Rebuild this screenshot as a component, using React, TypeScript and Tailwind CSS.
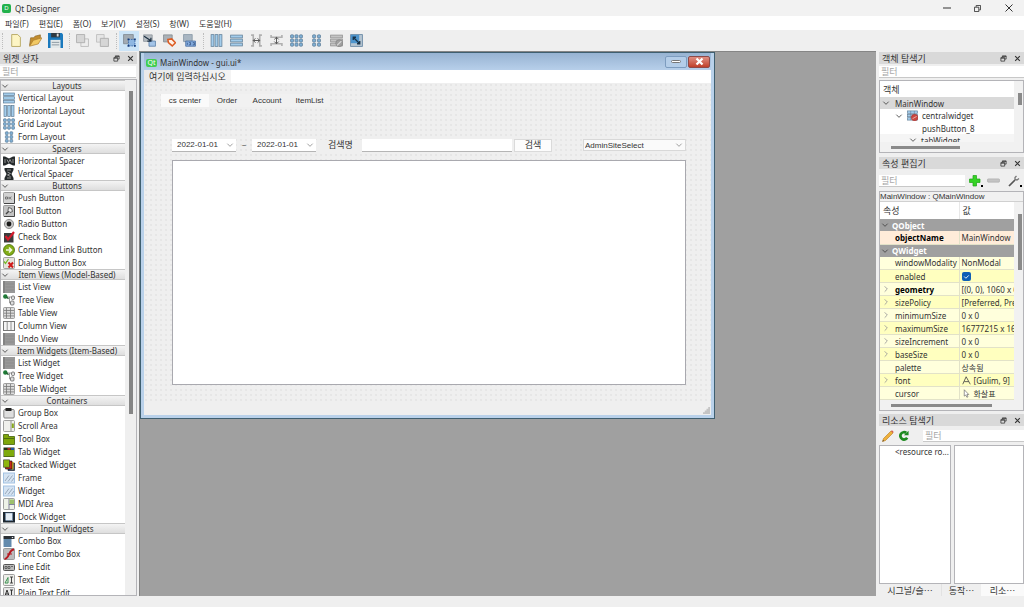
import type { ReactNode } from "react";

type Name = string;

const BLUE = "#7fb0d6";
const EDGE = "#5f7d96";

function Bars({ vertical, gray }: { vertical?: boolean; gray?: boolean }) {
  return (
    <g fill={gray ? "#c4c4c4" : "#a3cdec"} stroke={gray ? "#8c8c8c" : EDGE} strokeWidth=".7">
      {[1, 4.7, 8.4].map((p) =>
        vertical ? <rect key={p} x={p} y="0.6" width="2.6" height="10.8" /> : <rect key={p} x="0.6" y={p} width="10.8" height="2.6" />
      )}
    </g>
  );
}

function Dots({ cols }: { cols: number[] }) {
  return (
    <g fill={BLUE} stroke={EDGE} strokeWidth=".7">
      {cols.map((x) => [0.8, 4.6, 8.4].map((y) => <rect key={x + "-" + y} x={x} y={y} width="2.8" height="2.8" rx=".6" />))}
    </g>
  );
}

const Plate = ({ fill = "#d5d5d5" }: { fill?: string }) => (
  <rect x=".5" y=".5" width="11" height="11" rx="1" fill={fill} stroke="#8a8a8a" strokeWidth=".8" />
);

const ICONS: Record<Name, ReactNode> = {
  vlayout: <Bars />,
  hlayout: <Bars vertical />,
  grid: <Dots cols={[0.5, 4.6, 8.7]} />,
  form: <Dots cols={[2.4, 6.9]} />,
  hspacer: (
    <>
      <path d="M0 1.5h2L6 3.500l4-2H12v9H10L6 8.500l-4 2H0z" fill="#252a2c" />
      <path d="M2 4v4M4 4.500l1.500 3 1.500-3 1.500 3M10 4v4" stroke="#aaa" strokeWidth=".8" fill="none" />
    </>
  ),
  vspacer: (
    <>
      <path d="M1.500 0v2L3.500 6 1.500 10V12h9V10L8.500 6l2-4V0z" fill="#252a2c" />
      <path d="M4 2h4M4.500 4l3 1.500-3 1.500 3 1.500M4 10h4" stroke="#aaa" strokeWidth=".8" fill="none" />
    </>
  ),
  push: (
    <>
      <Plate fill="#d2d2d2" />
      <path d="M1 11.500h10.500V1" stroke="#444" fill="none" />
      <path d="M2.500 5h2v2H2.500zM6 4.800v2.500M8.500 4.800L6.500 6l2 1.300" stroke="#555" fill="none" strokeWidth=".7" />
    </>
  ),
  tool: (
    <>
      <Plate fill="#c2c2c2" />
      <path d="M1 11.500h10.500V1" stroke="#444" fill="none" />
      <path d="M3 9l4-4" stroke="#444" strokeWidth="1.500" />
      <path d="M5.500 2.500l3 1 1 3-2.500 1L5 5.500z" stroke="#444" fill="#eee" strokeWidth=".8" />
    </>
  ),
  radio: (
    <>
      <circle cx="6" cy="6" r="4.600" fill="#c4c4c4" stroke="#888" strokeWidth=".9" />
      <circle cx="6" cy="6" r="2.400" fill="#1a1a1a" />
    </>
  ),
  check: (
    <>
      <path d="M1 2h9.500v9.500H1z" fill="#3c3c3c" />
      <path d="M2.500 5l2.500 3.500L11 1" stroke="#d41c2c" strokeWidth="2.200" fill="none" />
    </>
  ),
  command: (
    <>
      <circle cx="6" cy="6" r="5.500" fill="#82ad16" stroke="#4b6d0b" strokeWidth=".8" />
      <path d="M3 6h5M6 3.500L8.500 6 6 8.500" stroke="#f2f7df" strokeWidth="1.600" fill="none" />
    </>
  ),
  dialog: (
    <>
      <Plate fill="#e6e3dc" />
      <path d="M1 4.500l1.500 2L5.500 2" stroke="#77b82a" fill="none" strokeWidth="1.300" />
      <path d="M5.500 5.500l4.500 5M10 5.500l-4.500 5" stroke="#cf1d1d" strokeWidth="2" />
    </>
  ),
  list: (
    <>
      <path d="M0 0h12v12H0z" fill="#989898" />
      <path d="M0 0h2v12H0z" fill="#838383" />
      <path d="M2.500 3h8.500M2.500 6h8.500M2.500 9h8.500" stroke="#888" strokeWidth=".7" />
    </>
  ),
  tree: (
    <>
      <path d="M4 3h4.500M6.500 3v6H9" stroke="#888" fill="none" strokeWidth=".8" />
      <circle cx="2.300" cy="2.500" r="2.200" fill="#1f7a37" />
      <path d="M3.500 3l2 1.800" stroke="#1f5a2c" strokeWidth="1.200" />
      <rect x="8.500" y="2" width="3" height="3.500" rx="1" fill="#ddd" stroke="#555" strokeWidth=".7" />
      <rect x="7.500" y="7" width="3.500" height="4" rx="1" fill="#ddd" stroke="#555" strokeWidth=".7" />
    </>
  ),
  table: (
    <>
      <Plate fill="#dcdcdc" />
      <path d="M1 3.500h10M1 6.200h10M1 8.900h10M3.500 1v10M7.500 1v10" stroke="#777" strokeWidth=".8" />
    </>
  ),
  column: (
    <>
      <rect x=".5" y="1.500" width="11" height="9" fill="#f4f4f4" stroke="#777" />
      <path d="M4.200 2v8M8 2v8" stroke="#888" strokeWidth=".9" />
    </>
  ),
  group: (
    <>
      <rect x=".8" y="2.500" width="10.400" height="8.500" rx="1" fill="#dedede" stroke="#777" strokeWidth=".9" />
      <path d="M2.500 1h6v3h-6z" fill="#222" />
    </>
  ),
  scroll: (
    <>
      <Plate fill="#f0f0ec" />
      <path d="M8 1v10" stroke="#777" strokeWidth=".8" />
      <path d="M8.800 3.500h2v4.500H8.800z" fill="#87a91b" />
    </>
  ),
  toolbox: (
    <>
      <path d="M.5 1.500h5v2h6v8H.5z" fill="#7fa60a" stroke="#42600b" strokeWidth=".8" />
      <path d="M1 5.500h10" stroke="#4f6f0c" />
    </>
  ),
  tab: (
    <>
      <path d="M.5 1.500h11v9.500H.5z" fill="#223018" />
      <path d="M1 4h10v6.500H1z" fill="#7eaa0c" />
      <path d="M4.500 2h3v1.800h-3z" fill="#ba2b20" />
      <path d="M8 2h3v1.800H8z" fill="#2458aa" />
    </>
  ),
  stacked: (
    <>
      <path d="M5 4h6.500v7.500H5z" fill="#21448f" stroke="#111" strokeWidth=".6" />
      <path d="M7.500 3h3v7.500h-3z" fill="#e7c41f" />
      <path d="M2.500 2h6.500v8H2.500z" fill="#c92818" stroke="#111" strokeWidth=".6" />
      <path d="M.5.800h6v7.500H.5z" fill="#8db60e" stroke="#333" strokeWidth=".6" />
    </>
  ),
  frame: (
    <>
      <rect x=".5" y="1" width="11" height="10" fill="#d5e3f2" stroke="#a3c2e2" />
      <path d="M2 9l4-5.500M5 9.500l4.500-6M8.500 9.500L11 6" stroke="#9aa9ba" strokeWidth="1" />
    </>
  ),
  mdi: (
    <>
      <Plate fill="#eef2e8" />
      <path d="M6 1v10M6 6.500h5.500" stroke="#668" strokeWidth=".8" />
      <path d="M6.500 1.500h4.500v4.500H6.500z" fill="#9cc06b" />
    </>
  ),
  dock: (
    <>
      <path d="M0 1h12v10.500H0z" fill="#1c2630" />
      <path d="M2.500 2h7v7.500h-7z" fill="#e5edf5" />
      <path d="M2.500 2h7v7.500h-7z" stroke="#6c8db0" strokeDasharray="1 1" fill="none" />
    </>
  ),
  combo: (
    <>
      <path d="M.5 1h11v3H.5z" fill="#2b3036" />
      <path d="M.5 4h8v8h-8z" fill="#648bad" />
      <path d="M8.500 2h2l-1 1.300z" fill="#fff" />
    </>
  ),
  fontcombo: (
    <>
      <Plate fill="#bcbcbc" />
      <path d="M1.500 11C6.500 11 5.500 1.500 11 1.500" stroke="#b71820" strokeWidth="1.900" fill="none" />
      <path d="M4 6h5" stroke="#b71820" />
    </>
  ),
  line: (
    <>
      <rect x=".5" y="3.500" width="11" height="6" rx="1" fill="#bbb" stroke="#555" />
      <path d="M2 5.500h2v2H2zM5 5.500h2v2H5zM8 5.500h2" stroke="#333" fill="none" strokeWidth=".6" />
    </>
  ),
  text: (
    <>
      <Plate fill="#eeeeea" />
      <path d="M2 9l3-5.500V9z" stroke="#3a9150" fill="none" />
      <path d="M7 3h3M8.500 3v6M7 9h3" stroke="#333" strokeWidth=".9" />
    </>
  ),
  plain: (
    <>
      <Plate fill="#e6e6e6" />
      <path d="M2 9l2-6 2 6M2.500 7h3M7 3h3M8.500 3v6M7 9h3" stroke="#222" strokeWidth=".9" fill="none" />
    </>
  ),
  new: <path d="M2.500.500h5.500l2.500 2.500v8.500h-8z" fill="#fdf5c4" stroke="#b3a35c" strokeWidth=".8" />,
  open: (
    <>
      <path d="M.5 10.500L1.500 3.500h3l1-1.500L10.500.800v4z" fill="#c28d2f" stroke="#8b6420" strokeWidth=".6" />
      <path d="M.5 11.300L4 5.800 12 3.500 8.500 9.200z" fill="#f2c964" stroke="#a87829" strokeWidth=".6" />
    </>
  ),
  save: (
    <>
      <path d="M0 0h11l1 1v11H0z" fill="#1a79bd" />
      <path d="M2.500 0h7v3.500h-7z" fill="#2f3a42" />
      <path d="M7 .500h1.500v2.300H7z" fill="#ddd" />
      <path d="M2 5.500h8V12H2z" fill="#e3e8e9" />
      <path d="M3 7.500h6M3 9.500h6" stroke="#8f9ba4" strokeWidth=".8" />
    </>
  ),
  back: (
    <>
      <path d="M4.500 4.500h7v7h-7z" fill="#ededed" stroke="#b9b9b9" strokeWidth=".8" />
      <path d="M.5.500h7.500v7.500H.5z" fill="#d6d6d6" stroke="#adadad" strokeWidth=".8" />
    </>
  ),
  front: (
    <>
      <path d="M.5.500h7v7h-7z" fill="#e6e6e6" stroke="#bebebe" strokeWidth=".8" />
      <path d="M4 4h7.500v7.500H4z" fill="#d6d6d6" stroke="#adadad" strokeWidth=".8" />
    </>
  ),
  widgets: (
    <>
      <path d="M.5.500h9v8.500h-9z" fill="#a2abb3" stroke="#7b848c" strokeWidth=".7" />
      <path d="M5 5h6v6H5z" fill="#8fb7e2" stroke="#3565a5" strokeWidth=".8" strokeDasharray="1.500 .8" />
      <path d="M4.200 4.200h1.600v1.600H4.200zM10.200 4.200h1.600v1.600h-1.600zM4.200 10.200h1.600v1.600H4.200zM10.200 10.200h1.600v1.600h-1.600z" fill="#173d7d" />
    </>
  ),
  signals: (
    <>
      <path d="M.5.800h8v6h-8z" fill="#b6bcc2" stroke="#878f96" strokeWidth=".7" />
      <path d="M5.500 6.500h6v4.800h-6z" fill="#a3c4e8" stroke="#547ba5" strokeWidth=".7" />
      <path d="M1 2l6 4M7.300 3.500v3H4" stroke="#1c2f42" strokeWidth="1.100" fill="none" />
    </>
  ),
  buddies: (
    <>
      <path d="M.5.800h8v6.500h-8z" fill="#aab1b7" stroke="#80878d" strokeWidth=".7" />
      <path d="M4.500 5l3.500-.5L11.500 8 8.500 11 5 8z" fill="#fff0e5" stroke="#dc5b22" strokeWidth="1.400" />
    </>
  ),
  taborder: (
    <>
      <path d="M.5.500h8v6.500h-8z" fill="#a9b6c2" stroke="#8394a3" strokeWidth=".7" />
      <path d="M2.500 6.500h9v4.800h-9z" fill="#86ade0" stroke="#42699c" strokeWidth=".7" />
      <path d="M4 8v2M5.500 8h1.500v2H5.500M9 8h1.500v2H9" stroke="#24426d" strokeWidth=".6" fill="none" />
    </>
  ),
  hsplit: (
    <>
      <path d="M1 1h2v10H1M11 1H9v10h2" stroke="#b0b0b0" strokeWidth="1.500" fill="none" />
      <path d="M3 6h6M5 4L3 6l2 2M7 4l2 2-2 2" stroke="#555" strokeWidth=".9" fill="none" />
    </>
  ),
  vsplit: (
    <>
      <path d="M1 1v2h10V1M1 11V9h10v2" stroke="#b0b0b0" strokeWidth="1.500" fill="none" />
      <path d="M6 3v6M4 5l2-2 2 2M4 7l2 2 2-2" stroke="#555" strokeWidth=".9" fill="none" />
    </>
  ),
  breaklayout: (
    <>
      <Bars gray />
      <circle cx="8.500" cy="8.500" r="3.200" fill="#a0a0a0" stroke="#868686" strokeWidth=".7" />
      <path d="M6.500 10.500l4-4" stroke="#ddd" />
    </>
  ),
  adjust: (
    <>
      <path d="M.5.500h11v11H.5z" fill="#b5c5d2" stroke="#6a8aa6" strokeWidth=".8" />
      <path d="M.8.800h7.700v7.700H.8z" fill="#4d94cc" />
      <path d="M3 3l6 6M3 5.500V3h2.500M9 6.500V9H6.500" stroke="#173248" strokeWidth="1.200" fill="none" />
    </>
  ),
  central: (
    <>
      <Bars />
      <path d="M4 1v10M8 1v10" stroke={EDGE} strokeWidth=".6" />
      <circle cx="8.300" cy="8.300" r="3.600" fill="#cc4840" stroke="#a22d29" strokeWidth=".5" />
      <path d="M6 9.500l4.500-2.500" stroke="#e9b5b0" strokeWidth="1" />
    </>
  ),
  plus: <path d="M4 .500h3.500V4H11v3.500H7.500V11H4V7.500H.5V4H4z" fill="#35d325" stroke="#1ca515" strokeWidth=".7" />,
  minus: <rect x=".5" y="4.500" width="11" height="3" rx=".6" fill="#c4c4c4" stroke="#aaa" strokeWidth=".6" />,
  wrench: (
    <>
      <path d="M1 11l6-6" stroke="#555" strokeWidth="1.700" />
      <path d="M8.500 1L7 2.500v2l2 .5 2-1.500" stroke="#777" strokeWidth="1.300" fill="none" />
    </>
  ),
  pencil: (
    <>
      <path d="M.5 11.500l1-3L9 1l2 2-7.500 7.500z" fill="#eeb13c" stroke="#b97a1d" strokeWidth=".6" />
      <path d="M9 1l1-.8L11.700 2 11 3z" fill="#d4574d" />
      <path d="M.5 11.500l.5-1.500 1 1z" fill="#333" />
    </>
  ),
  reload: (
    <>
      <path d="M10 8.500A4 4 0 1 1 9 3.200" stroke="#1d8a20" strokeWidth="3" fill="none" />
      <path d="M11.500.800v5h-5z" fill="#1d8a20" />
    </>
  ),
  fontA: <path d="M1 11L5.500 1 11 11M3 7.500h6" stroke="#444" strokeWidth="1.100" fill="none" />,
  cursor: <path d="M3 1v8.500l2-1.500 1.500 3 1.500-.7-1.500-3H9z" fill="#fff" stroke="#555" strokeWidth=".8" />,
  restore: <path d="M4 4V1.500h6.500V7H8M1.500 4.500H8v6H1.500zM1.500 5.500H8M4 2.500h6.500" stroke="#333" strokeWidth="1.300" fill="none" />,
  close: <path d="M2 2l8 8M10 2l-8 8" stroke="#333" strokeWidth="2" />,
  down: <path d="M2 4l4 4 4-4" stroke="#444" strokeWidth="1.300" fill="none" />,
  downLight: <path d="M2 4l4 4 4-4" stroke="#888" strokeWidth="1.200" fill="none" />,
  right: <path d="M4 2l4 4-4 4" stroke="#999" strokeWidth="1.300" fill="none" />,
};

function Icon({ name, className = "size-3" }: { name: Name; className?: string }) {
  return (
    <svg viewBox="0 0 12 12" aria-hidden="true" className={`shrink-0 ${className}`}>
      {ICONS[name]}
    </svg>
  );
}

const MENUS = ["파일(F)", "편집(E)", "폼(O)", "보기(V)", "설정(S)", "창(W)", "도움말(H)"];

const TOOLBAR = [
  ["new", "open", "save"],
  ["back", "front"],
  ["widgets", "signals", "buddies", "taborder"],
  ["hlayout", "vlayout", "hsplit", "vsplit", "grid", "form", "breaklayout", "adjust"],
];

const WIDGET_GROUPS: { title: string; items: [Name, string][] }[] = [
  { title: "Layouts", items: [["vlayout", "Vertical Layout"], ["hlayout", "Horizontal Layout"], ["grid", "Grid Layout"], ["form", "Form Layout"]] },
  { title: "Spacers", items: [["hspacer", "Horizontal Spacer"], ["vspacer", "Vertical Spacer"]] },
  {
    title: "Buttons",
    items: [["push", "Push Button"], ["tool", "Tool Button"], ["radio", "Radio Button"], ["check", "Check Box"], ["command", "Command Link Button"], ["dialog", "Dialog Button Box"]],
  },
  { title: "Item Views (Model-Based)", items: [["list", "List View"], ["tree", "Tree View"], ["table", "Table View"], ["column", "Column View"], ["list", "Undo View"]] },
  { title: "Item Widgets (Item-Based)", items: [["list", "List Widget"], ["tree", "Tree Widget"], ["table", "Table Widget"]] },
  {
    title: "Containers",
    items: [["group", "Group Box"], ["scroll", "Scroll Area"], ["toolbox", "Tool Box"], ["tab", "Tab Widget"], ["stacked", "Stacked Widget"], ["frame", "Frame"], ["frame", "Widget"], ["mdi", "MDI Area"], ["dock", "Dock Widget"]],
  },
  { title: "Input Widgets", items: [["combo", "Combo Box"], ["fontcombo", "Font Combo Box"], ["line", "Line Edit"], ["text", "Text Edit"], ["plain", "Plain Text Edit"]] },
];

type Prop = { name: string; value?: string; group?: boolean; bold?: boolean; expand?: boolean; icon?: Name; check?: boolean; bg?: string };

const PROPS: Prop[] = [
  { name: "QObject", group: true },
  { name: "objectName", value: "MainWindow", bold: true, bg: "bg-[#ffecd9]" },
  { name: "QWidget", group: true },
  { name: "windowModality", value: "NonModal", bg: "bg-[#ffffdc]" },
  { name: "enabled", check: true, bg: "bg-[#ffffbf]" },
  { name: "geometry", value: "[(0, 0), 1060 x 600]", bold: true, expand: true, bg: "bg-[#ffffdc]" },
  { name: "sizePolicy", value: "[Preferred, Preferred]", expand: true, bg: "bg-[#ffffbf]" },
  { name: "minimumSize", value: "0 x 0", expand: true, bg: "bg-[#ffffdc]" },
  { name: "maximumSize", value: "16777215 x 16777215", expand: true, bg: "bg-[#ffffbf]" },
  { name: "sizeIncrement", value: "0 x 0", expand: true, bg: "bg-[#ffffdc]" },
  { name: "baseSize", value: "0 x 0", expand: true, bg: "bg-[#ffffbf]" },
  { name: "palette", value: "상속됨", bg: "bg-[#ffffdc]" },
  { name: "font", value: "[Gulim, 9]", icon: "fontA", expand: true, bg: "bg-[#ffffbf]" },
  { name: "cursor", value: "화살표", icon: "cursor", bg: "bg-[#ffffdc]" },
];

function DockTitle({ title }: { title: string }) {
  return (
    <div className="flex h-3 shrink-0 items-center gap-[7px] bg-[#d9d9d9] pr-[3px] pl-[3px]">
      <h2 className="flex-1 text-[9px]">{title}</h2>
      <button aria-label="분리" className="flex"><Icon name="restore" className="size-[7px]" /></button>
      <button aria-label="닫기" className="flex"><Icon name="close" className="size-[7px]" /></button>
    </div>
  );
}

function Filter({ label }: { label: string }) {
  return (
    <input
      aria-label={label}
      placeholder="필터"
      className="h-3 w-full min-w-0 border-b border-[#c8c8c8] bg-white px-[2px] text-[9px] outline-none placeholder:text-[#a5a5a5]"
    />
  );
}

function WidgetBox() {
  return (
    <aside className="flex w-[137px] shrink-0 flex-col">
      <DockTitle title="위젯 상자" />
      <div className="pt-[2px] pr-px pb-px">
        <Filter label="위젯 필터" />
      </div>
      <div className="flex min-h-0 flex-1 overflow-hidden border border-[#b4b4b8] bg-[#efefef]">
        <div className="flex-1 bg-white">
          {WIDGET_GROUPS.map((g) => (
            <section key={g.title}>
              <h3 className="flex h-[11px] items-center border-y border-[#c6c6c6] bg-linear-to-b from-[#f4f4f4] to-[#dedede]">
                <Icon name="down" className="size-2" />
                <span className="flex-1 text-center">{g.title}</span>
              </h3>
              <ul>
                {g.items.map(([icon, label]) => (
                  <li key={label} className="flex h-[13px] items-center gap-[3px] pl-[2px]">
                    <Icon name={icon} />
                    {label}
                  </li>
                ))}
              </ul>
            </section>
          ))}
        </div>
        <div className="w-[11px] pt-[11px] pl-[4px]">
          <div className="h-[323px] w-[4px] bg-[#858585]" />
        </div>
      </div>
    </aside>
  );
}

function DateEdit({ label }: { label: string }) {
  return (
    <div className="flex h-[13px] w-16 items-center border-b border-[#b5b5b5] bg-white pr-[2px]">
      <input aria-label={label} defaultValue="2022-01-01" className="w-full min-w-0 pl-[5px] outline-none" />
      <Icon name="downLight" className="size-2" />
    </div>
  );
}

function FormWindow() {
  return (
    <section className="flex h-[367px] w-[575px] flex-col border border-[#3f5f70] bg-[#b9d1ea] px-[3px] pb-[3px]">
      <header className="flex h-[17px] shrink-0 items-center bg-linear-to-b from-[#97b3d2] to-[#b7cfea]">
        <span className="mt-[2px] ml-[2px] flex h-2 w-[11px] items-center justify-center rounded-xs bg-[#41cd52] text-[7px] text-white">Qt</span>
        <h2 className="mt-[2px] ml-[3px] flex-1">MainWindow - gui.ui*</h2>
        <button aria-label="최소화" className="flex h-3 w-[22px] items-center justify-center rounded-xs border border-[#7d9cbf] bg-[#b4cde8]">
          <span className="h-[3px] w-[10px] rounded-xs border border-[#777] bg-white" />
        </button>
        <button aria-label="창 닫기" className="mr-px ml-px flex h-3 w-[22px] items-center justify-center rounded-xs border border-[#8e4a48] bg-linear-to-b from-[#df8e82] to-[#c03e28]">
          <svg viewBox="0 0 12 12" className="size-[9px]"><path d="M2 2l8 8M10 2l-8 8" stroke="#fff" strokeWidth="3" /></svg>
        </button>
      </header>
      <div className="flex h-[13px] shrink-0 bg-white">
        <button className="bg-linear-to-r from-[#e9e9e9] to-[#f4f4f4] px-[5px] text-[9px]">여기에 입력하십시오</button>
      </div>
      <div className="flex min-h-0 flex-1 flex-col bg-[#efefef] bg-[radial-gradient(circle_at_2px_2px,#e0e0e0_0.5px,transparent_1px)] bg-size-[5px_5px] pt-[11px] font-['Liberation_Sans','Noto_Sans_CJK_KR',sans-serif]">
        <div role="tablist" className="ml-[17px] flex h-[13px]">
          <button role="tab" aria-selected="true" className="w-12 bg-[#fafafa]">cs center</button>
          <button role="tab" className="w-9 bg-[#f1f1f1]">Order</button>
          <button role="tab" className="w-11 bg-[#f1f1f1]">Account</button>
          <button role="tab" className="w-[41px] bg-[#f1f1f1]">ItemList</button>
        </div>
        <div className="mt-[31px] flex h-[14px] items-center pr-[25px] pl-[28px]">
          <DateEdit label="시작일" />
          <span className="w-4 text-center">~</span>
          <DateEdit label="종료일" />
          <label htmlFor="keyword" className="w-[46px] bg-[#efefef] pl-3 text-[9px]">검색명</label>
          <input id="keyword" className="h-[13px] min-w-0 flex-1 border-b border-[#b5b5b5] bg-white outline-none" />
          <button className="ml-[2px] h-[13px] w-[38px] border border-[#dadada] bg-[#fcfcfc] text-[9px] leading-[10px]">검색</button>
          <div className="ml-[31px] flex h-3 w-[103px] items-center border border-[#d8d8d8] bg-[#fafafa] pr-[2px]">
            <select aria-label="사이트" className="w-full min-w-0 appearance-none pl-px outline-none">
              <option>AdminSiteSelect</option>
            </select>
            <Icon name="downLight" className="size-2" />
          </div>
        </div>
        <div className="mt-2 mr-[25px] ml-[28px] h-[225px] border border-[#a9a9af] bg-white" />
        <div className="mt-auto flex h-3 items-end justify-end bg-[#efefef] p-px">
          <svg viewBox="0 0 8 8" className="size-[7px]"><path d="M6 0h2v8H0V6h2V4h2V2h2z" fill="#c4c4c4" /></svg>
        </div>
      </div>
    </section>
  );
}

function ObjectInspector() {
  return (
    <section>
      <DockTitle title="객체 탐색기" />
      <div className="py-[2px]"><Filter label="객체 필터" /></div>
      <div className="flex h-[73px] border border-[#b4b4b8] bg-[#f1f1f1]">
        <div className="flex min-w-0 flex-1 flex-col">
          <div className="h-[61px] overflow-hidden bg-white pt-px">
            <div className="flex h-[15px] items-center pl-[3px] text-[9px]">객체</div>
            <ul>
              <li className="flex h-3 items-center gap-[5px] bg-[#d9d9d9] pl-[2px]"><Icon name="down" className="size-2" />MainWindow</li>
              <li className="flex h-[13px] items-center gap-1 pl-[15px]"><Icon name="down" className="size-2" /><Icon name="central" className="size-[11px]" />centralwidget</li>
              <li className="flex h-3 items-center pl-[42px]">pushButton_8</li>
              <li className="flex h-3 items-center gap-1 bg-[#f5f5f5] pl-[29px]"><Icon name="down" className="size-2" />tabWidget</li>
            </ul>
          </div>
          <div className="mt-[4px] ml-[11px] h-[3px] w-[69px] bg-[#8a8a8a]" />
        </div>
        <div className="w-[9px] pt-[12px] pl-[4px]"><div className="h-3 w-[4px] bg-[#8a8a8a]" /></div>
      </div>
    </section>
  );
}

function PropertyEditor() {
  return (
    <section className="mt-1">
      <DockTitle title="속성 편집기" />
      <div className="flex h-[22px] items-center gap-[4px] pt-px pr-[2px]">
        <div className="w-[86px]"><Filter label="속성 필터" /></div>
        <button aria-label="추가" className="flex items-end"><Icon name="plus" className="size-3" /><span className="size-[2px] bg-black" /></button>
        <button aria-label="제거" className="flex flex-1"><Icon name="minus" className="size-[13px]" /></button>
        <button aria-label="설정" className="flex items-end"><Icon name="wrench" className="size-3" /><span className="size-[2px] bg-black" /></button>
      </div>
      <div className="h-[220px] border border-[#b4b4b8] bg-[#f1f1f1]">
        <p className="flex h-[10px] items-center border-b border-[#d0d0d0] font-['Liberation_Sans',sans-serif] whitespace-nowrap">MainWindow : QMainWindow</p>
        <div className="flex h-[198px]">
          <div className="min-w-0 flex-1 overflow-hidden bg-[#ffffbf]">
            <table className="w-full table-fixed border-collapse">
              <thead>
                <tr className="h-[17px] bg-white text-left text-[9px]">
                  <th className="w-[79px] border-r border-[#e8e8e8] p-0 pl-[3px] font-normal">속성</th>
                  <th className="p-0 pl-[3px] font-normal">값</th>
                </tr>
              </thead>
              <tbody>
                {PROPS.map((p) =>
                  p.group ? (
                    <tr key={p.name} className="h-3 bg-[#a0a0a0] font-bold text-white">
                      <td colSpan={2} className="p-0">
                        <div className="flex h-3 items-center gap-[3px] pl-px"><Icon name="down" className="size-2" />{p.name}</div>
                      </td>
                    </tr>
                  ) : (
                    <tr key={p.name} className={`h-[13px] ${p.bg}`}>
                      <td className="border-r border-b border-[#e2e2c8] p-0">
                        <div className={`flex h-3 items-center gap-[5px] pl-[2px] ${p.bold ? "font-bold text-black" : ""}`}>
                          {p.expand ? <Icon name="right" className="size-2" /> : <span className="size-2 shrink-0" />}
                          {p.name}
                        </div>
                      </td>
                      <td className="overflow-hidden border-b border-[#e2e2c8] p-0">
                        <div className="flex h-3 items-center gap-[3px] pl-[2px] whitespace-nowrap">
                          {p.icon && <Icon name={p.icon} className="size-[9px]" />}
                          {p.check && (
                            <label className="flex size-[9px] items-center justify-center rounded-xs bg-[#0f5fb5]">
                              <input type="checkbox" aria-label="enabled" defaultChecked className="size-0 appearance-none" />
                              <svg viewBox="0 0 12 12" className="size-[7px]"><path d="M2 6l3 3 5-5" stroke="#fff" strokeWidth="1.500" fill="none" /></svg>
                            </label>
                          )}
                          {p.value}
                        </div>
                      </td>
                    </tr>
                  )
                )}
              </tbody>
            </table>
          </div>
          <div className="w-[9px] pt-[12px] pl-[4px]"><div className="h-14 w-[4px] bg-[#8a8a8a]" /></div>
        </div>
        <div className="mt-[4px] ml-[11px] h-[3px] w-[101px] bg-[#8a8a8a]" />
      </div>
    </section>
  );
}

function ResourceBrowser() {
  return (
    <section className="mt-[3px] flex min-h-0 flex-1 flex-col">
      <DockTitle title="리소스 탐색기" />
      <div className="flex h-[19px] shrink-0 items-center gap-[4px] pl-[3px]">
        <button aria-label="편집" className="flex"><Icon name="pencil" /></button>
        <button aria-label="새로 고침" className="flex"><Icon name="reload" className="size-[11px]" /></button>
        <div className="ml-[10px] flex-1"><Filter label="리소스 필터" /></div>
      </div>
      <div className="flex min-h-0 flex-1 gap-[3px]">
        <div className="w-[72px] border border-[#b4b4b8] bg-white pl-[15px] whitespace-nowrap">&lt;resource ro...</div>
        <div className="flex-1 border border-[#b4b4b8] bg-white" />
      </div>
      <div role="tablist" className="flex h-3 shrink-0 text-[9px]">
        <button role="tab" className="w-[63px] border-r border-[#e2e2e2]">시그널/슬⋯</button>
        <button role="tab" className="w-[39px]">동작⋯</button>
        <button role="tab" aria-selected="true" className="flex-1 bg-[#fafafa]">리소⋯</button>
      </div>
    </section>
  );
}

export default function App() {
  return (
    <div className="flex h-screen flex-col overflow-hidden bg-[#efefef] font-['Noto_Sans','Noto_Sans_CJK_KR',sans-serif] text-[8px] leading-[11px] text-[#333]">
      <header className="flex h-4 shrink-0 items-center bg-[#f2f2f2] pl-[2px]">
        <span className="flex size-[9px] items-center justify-center rounded-xs bg-[#22b14c] text-[6px] text-white">D</span>
        <h1 className="ml-[4px] flex-1">Qt Designer</h1>
        <button aria-label="최소화" className="w-[31px]"><svg viewBox="0 0 8 8" className="mx-auto size-2"><path d="M0 4h8" stroke="#333" /></svg></button>
        <button aria-label="이전 크기로" className="w-[31px]"><svg viewBox="0 0 8 8" className="mx-auto size-[7px]"><path d="M.5 2.500h5v5h-5zM2.500 2V.500h5v5H6" stroke="#333" fill="none" /></svg></button>
        <button aria-label="종료" className="w-[31px]"><svg viewBox="0 0 8 8" className="mx-auto size-2"><path d="M.5.500l7 7M7.500.500l-7 7" stroke="#333" /></svg></button>
      </header>
      <nav className="flex h-[14px] shrink-0 items-center gap-[10px] bg-white pl-[5px]">
        {MENUS.map((m) => (
          <button key={m}>{m}</button>
        ))}
      </nav>
      <div className="flex h-[21px] shrink-0 items-center gap-[4px] pl-[2px]">
        {TOOLBAR.map((group, i) => (
          <div key={i} className="flex items-center">
            <span className="mr-[2px] h-4 border-l border-dotted border-[#bdbdbd]" />
            {group.map((name) => (
              <button key={name} aria-label={name} className={`flex size-5 items-center justify-center ${name === "widgets" ? "bg-[#cce4f7]" : ""}`}>
                <Icon name={name} className={name === "save" ? "size-[15px]" : "size-[13px]"} />
              </button>
            ))}
          </div>
        ))}
      </div>
      <main className="flex min-h-0 flex-1">
        <div className="flex pt-px"><WidgetBox /></div>
        <div className="ml-[2px] min-w-0 flex-1 overflow-hidden border-t border-l border-[#858585] bg-[#a0a0a0]">
          <FormWindow />
        </div>
        <aside className="ml-[3px] flex w-[145px] shrink-0 flex-col pt-px">
          <ObjectInspector />
          <PropertyEditor />
          <ResourceBrowser />
        </aside>
      </main>
      <footer className="h-[11px] shrink-0" />
    </div>
  );
}
